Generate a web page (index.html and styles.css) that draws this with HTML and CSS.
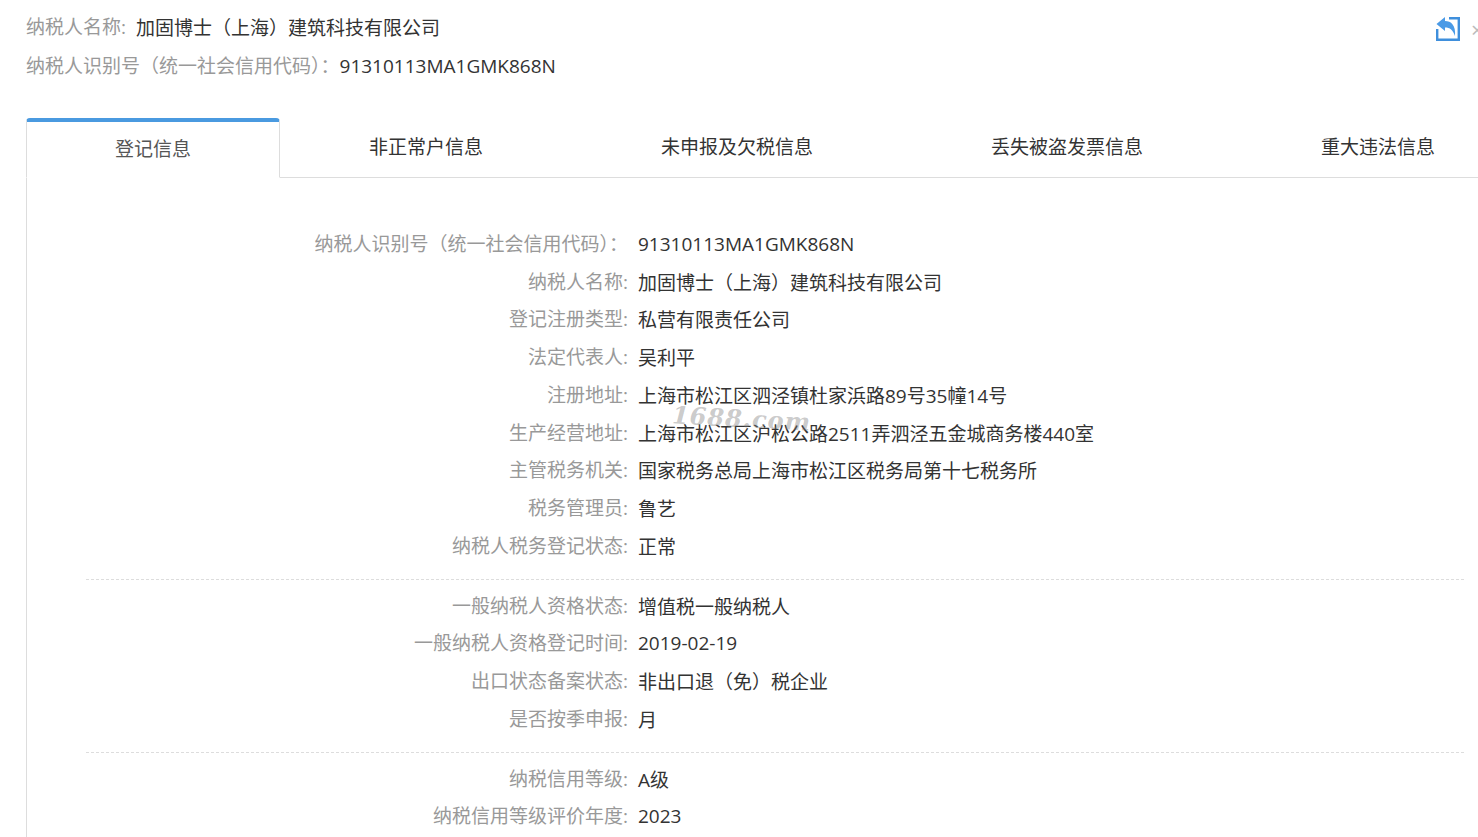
FILE: index.html
```html
<!DOCTYPE html>
<html lang="en">
<head>
    <meta charset="UTF-8">
    <meta name="viewport" content="width=device-width, initial-scale=1.0">
    <title>纳税人信息</title>
    <link rel="stylesheet" href="styles.css">
</head>
<body>
    <div class="page">
        <header class="summary">
            <div class="summary-lines">
                <div class="summary-line summary-name">
                    <span class="summary-label">纳税人名称:</span>
                    <span class="summary-value">加固博士（上海）建筑科技有限公司</span>
                </div>
                <div class="summary-line summary-code">
                    <span class="summary-label">纳税人识别号（统一社会信用代码）：</span>
                    <span class="summary-value">91310113MA1GMK868N</span>
                </div>
            </div>
            <a class="back-link" href="#" aria-label="返回">
                <svg class="back-icon" viewBox="0 0 24 24" width="24" height="24">
                    <path d="M13 1.2H22.8V22.8H1.2V12" fill="none" stroke="#3f8fdc" stroke-width="2.4"/>
                    <path d="M0.5 7L9 0V4C15 4 20 8 19 19C17 13 14 10.5 9 10.5V14Z" fill="#4a9ae6"/>
                </svg>
            </a>
            <span class="close-mark">×</span>
        </header>

        <nav class="tabs">
            <a class="tab tab-active" href="#">登记信息</a>
            <a class="tab" href="#">非正常户信息</a>
            <a class="tab" href="#">未申报及欠税信息</a>
            <a class="tab" href="#">丢失被盗发票信息</a>
            <a class="tab" href="#">重大违法信息</a>
        </nav>

        <main class="panel">
            <section class="info-group info-group-first">
                <div class="info-row"><span class="info-label">纳税人识别号（统一社会信用代码）：</span><span class="info-value">91310113MA1GMK868N</span></div>
                <div class="info-row"><span class="info-label">纳税人名称:</span><span class="info-value">加固博士（上海）建筑科技有限公司</span></div>
                <div class="info-row"><span class="info-label">登记注册类型:</span><span class="info-value">私营有限责任公司</span></div>
                <div class="info-row"><span class="info-label">法定代表人:</span><span class="info-value">吴利平</span></div>
                <div class="info-row"><span class="info-label">注册地址:</span><span class="info-value">上海市松江区泗泾镇杜家浜路89号35幢14号</span></div>
                <div class="info-row"><span class="info-label">生产经营地址:</span><span class="info-value">上海市松江区沪松公路2511弄泗泾五金城商务楼440室</span></div>
                <div class="info-row"><span class="info-label">主管税务机关:</span><span class="info-value">国家税务总局上海市松江区税务局第十七税务所</span></div>
                <div class="info-row"><span class="info-label">税务管理员:</span><span class="info-value">鲁艺</span></div>
                <div class="info-row"><span class="info-label">纳税人税务登记状态:</span><span class="info-value">正常</span></div>
            </section>
            <section class="info-group">
                <div class="info-row"><span class="info-label">一般纳税人资格状态:</span><span class="info-value">增值税一般纳税人</span></div>
                <div class="info-row"><span class="info-label">一般纳税人资格登记时间:</span><span class="info-value">2019-02-19</span></div>
                <div class="info-row"><span class="info-label">出口状态备案状态:</span><span class="info-value">非出口退（免）税企业</span></div>
                <div class="info-row"><span class="info-label">是否按季申报:</span><span class="info-value">月</span></div>
            </section>
            <section class="info-group info-group-last">
                <div class="info-row"><span class="info-label">纳税信用等级:</span><span class="info-value">A级</span></div>
                <div class="info-row"><span class="info-label">纳税信用等级评价年度:</span><span class="info-value">2023</span></div>
            </section>
        </main>

        <div class="watermark">1688.com</div>
    </div>
</body>
</html>
```

FILE: styles.css
```css
html, body {
    margin: 0;
    padding: 0;
    height: 100%;
    overflow: hidden;
}

body {
    font-family: "Open Sans", "Noto Sans CJK SC", sans-serif;
    font-size: 19px;
    background-color: #fff;
    color: #333;
}

.page {
    position: relative;
    height: 837px;
    overflow: hidden;
}

.summary {
    display: flex;
    justify-content: space-between;
    align-items: flex-start;
    height: 118px;
    padding-left: 26px;
    box-sizing: border-box;
}

.summary-line {
    display: flex;
    align-items: center;
    height: 38px;
}

.summary-name {
    margin-top: 8px;
}

.summary-code {
    margin-top: 1px;
}

.summary-label {
    color: #999;
    position: relative;
    top: -1px;
}

.summary-name .summary-value {
    margin-left: 10px;
}

.summary-value {
    color: #333;
}

.back-link {
    margin: 17px 18px 0 auto;
    display: block;
    height: 24px;
}

.back-icon {
    display: block;
}

.close-mark {
    position: absolute;
    top: 14px;
    left: 1471px;
    color: #bbb;
    font-size: 22px;
}

.tabs {
    display: flex;
    margin-left: 26px;
    height: 59px;
    border-bottom: 1px solid #ddd;
    box-sizing: content-box;
}

.tab {
    flex: none;
    padding: 0 89px;
    line-height: 59px;
    color: #333;
    text-decoration: none;
    white-space: nowrap;
}

.tab-active {
    color: #555;
    background-color: #fff;
    border: 1px solid #ddd;
    border-top: 4px solid #4a9ae0;
    border-bottom: 1px solid #fff;
    border-radius: 4px 4px 0 0;
    line-height: 55px;
    padding: 0 88px;
    margin-right: 0;
    height: 55px;
}

.panel {
    margin-left: 26px;
    border-left: 1px solid #ddd;
    padding: 47px 14px 0 59px;
    height: 700px;
}

.info-group {
    padding: 7px 0 14px;
    border-bottom: 1px dashed #ddd;
}

.info-group-first {
    padding-top: 0;
}

.info-group-last {
    border-bottom: none;
}

.info-row {
    display: grid;
    grid-template-columns: 542px 1fr;
    column-gap: 10px;
    height: 37.75px;
    align-items: center;
}

.info-label {
    color: #999;
    text-align: right;
    position: relative;
    top: -1px;
    white-space: nowrap;
}

.info-value {
    color: #333;
    white-space: nowrap;
}

.watermark {
    position: absolute;
    left: 672px;
    top: 404px;
    font-family: "DejaVu Serif", serif;
    font-style: italic;
    font-weight: bold;
    font-size: 24px;
    letter-spacing: 1px;
    color: rgba(120, 120, 120, 0.4);
    transform: rotate(3deg);
}
```
